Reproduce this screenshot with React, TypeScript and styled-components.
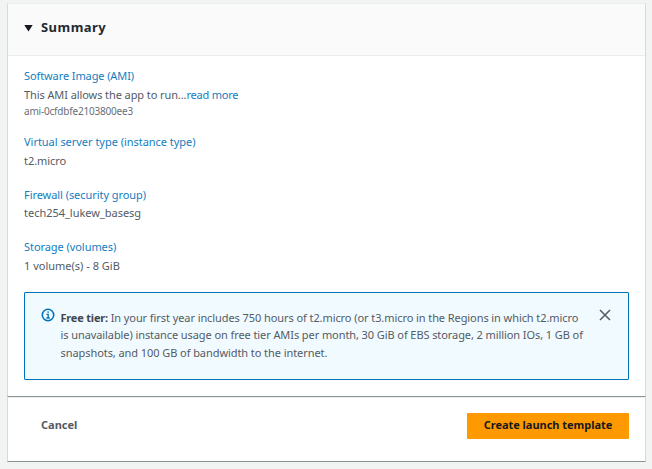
import React from "react";
import styled, { createGlobalStyle } from "styled-components";

const GlobalStyle = createGlobalStyle`
  * { box-sizing: border-box; }
  body {
    margin: 0;
    background: #f2f3f3;
    font-family: "Noto Sans", "Open Sans", sans-serif;
    font-size: 11px;
    color: #545b64;
  }
`;

const Page = styled.main`
  width: 652px;
  height: 469px;
  padding: 3px 6px 0 7px;
  overflow: hidden;
`;

const Card = styled.section`
  height: 394px;
  background: #fff;
  border: 1px solid #d5dbdb;
  border-top-color: #eaeded;
  border-bottom-color: #879596;
`;

const Header = styled.header`
  display: flex;
  align-items: center;
  height: 52px;
  padding: 0 16px 6px;
  background: #fafafa;
  border-bottom: 1px solid #eaeded;
`;

const Caret = styled.svg`
  width: 9px;
  height: 8px;
  margin-top: 3px;
  fill: #16191f;
`;

const Title = styled.h2<{ $track?: number }>`
  margin: 0 0 0 8px;
  font-size: 13px;
  line-height: 20px;
  font-weight: 700;
  color: #242830;
  letter-spacing: ${(p) => p.$track ?? 0}px;
`;

const Body = styled.div`
  padding: 11px 16px 0;
`;

const Item = styled.div<{ $height: number }>`
  height: ${(p) => p.$height}px;
`;

const Line = styled.div<{ $track?: number; $height?: number }>`
  white-space: nowrap;
  line-height: ${(p) => p.$height ?? 18}px;
  letter-spacing: ${(p) => p.$track ?? 0}px;
`;

const Label = styled(Line)`
  color: #147dc0;
`;

const Small = styled(Line)`
  font-size: 10px;
  color: #687078;
`;

const Link = styled.a`
  color: #147dc0;
  letter-spacing: -0.22px;
`;

const Alert = styled.div`
  display: flex;
  align-items: flex-start;
  height: 88px;
  padding: 16px 17.5px 0 15.5px;
  background: #f1faff;
  border: 1px solid #0073bb;
  border-radius: 1px;
`;

const InfoIcon = styled.svg`
  flex: none;
  width: 14px;
  height: 14px;
  margin-top: -1px;
  fill: none;
  stroke: #0073bb;
`;

const Message = styled.div`
  flex: 1;
  margin-left: 6px;
`;

const Strong = styled.b`
  color: #414750;
  letter-spacing: -0.2px;
`;

const Dismiss = styled.button`
  display: flex;
  padding: 0;
  border: 0;
  background: none;
`;

const Cross = styled.svg`
  width: 12px;
  height: 12px;
  stroke: #545b64;
  stroke-width: 1.5;
`;

const Footer = styled.footer`
  display: flex;
  justify-content: space-between;
  height: 65px;
  padding: 15px 16px 0 33px;
  background: #fff;
  border: 1px solid #d5dbdb;
  border-top: 1px solid #eaeded;
  border-bottom-color: #879596;
`;

const Button = styled.button<{ $primary?: boolean; $track?: number }>`
  height: 26px;
  width: ${(p) => (p.$primary ? "162px" : "auto")};
  padding: 0 0 2px;
  border: 0;
  border-radius: 1px;
  background: ${(p) => (p.$primary ? "#ff9900" : "none")};
  color: ${(p) => (p.$primary ? "#16191f" : "#545b64")};
  font: 700 11px/20px "Noto Sans", sans-serif;
  letter-spacing: ${(p) => p.$track ?? 0}px;
`;

export default function App() {
  return (
    <>
      <GlobalStyle />
      <Page>
        <Card>
          <Header>
            <Caret viewBox="0 0 9 8">
              <path d="M.3 1h8.4L4.5 7.5z" />
            </Caret>
            <Title $track={0.45}>Summary</Title>
          </Header>
          <Body>
            <Item $height={66}>
              <Label $track={-0.1}>Software Image (AMI)</Label>
              <Line $height={20} $track={-0.09}>
                This AMI allows the app to run...<Link>read more</Link>
              </Line>
              <Small $height={12} $track={-0.2}>ami-0cfdbfe2103800ee3</Small>
            </Item>
            <Item $height={53}>
              <Label $track={-0.03}>Virtual server type (instance type)</Label>
              <Line $height={20} $track={-0.05}>t2.micro</Line>
            </Item>
            <Item $height={52}>
              <Label $track={-0.06}>Firewall (security group)</Label>
              <Line $track={-0.02}>tech254_lukew_basesg</Line>
            </Item>
            <Item $height={54}>
              <Label $track={-0.06}>Storage (volumes)</Label>
              <Line $height={20}>1 volume(s) - 8 GiB</Line>
            </Item>
            <Alert>
              <InfoIcon viewBox="0 0 14 14">
                <circle cx="7" cy="7" r="5.7" strokeWidth="1.6" />
                <path d="M5.5 6.4h1.7v3.4M5.4 10h3.4M6.4 4.1h1.5" strokeWidth="1.3" />
              </InfoIcon>
              <Message>
                <Line $track={-0.08}>
                  <Strong>Free tier:</Strong> In your first year includes 750 hours of t2.micro (or t3.micro in the Regions in which t2.micro
                </Line>
                <Line $height={16} $track={-0.085}>is unavailable) instance usage on free tier AMIs per month, 30 GiB of EBS storage, 2 million IOs, 1 GB of</Line>
                <Line $height={19} $track={-0.07}>snapshots, and 100 GB of bandwidth to the internet.</Line>
              </Message>
              <Dismiss aria-label="Dismiss">
                <Cross viewBox="0 0 12 12">
                  <path d="M1 1l10 10M11 1L1 11" />
                </Cross>
              </Dismiss>
            </Alert>
          </Body>
        </Card>
        <Footer>
          <Button>Cancel</Button>
          <Button $primary $track={-0.03}>Create launch template</Button>
        </Footer>
      </Page>
    </>
  );
}
